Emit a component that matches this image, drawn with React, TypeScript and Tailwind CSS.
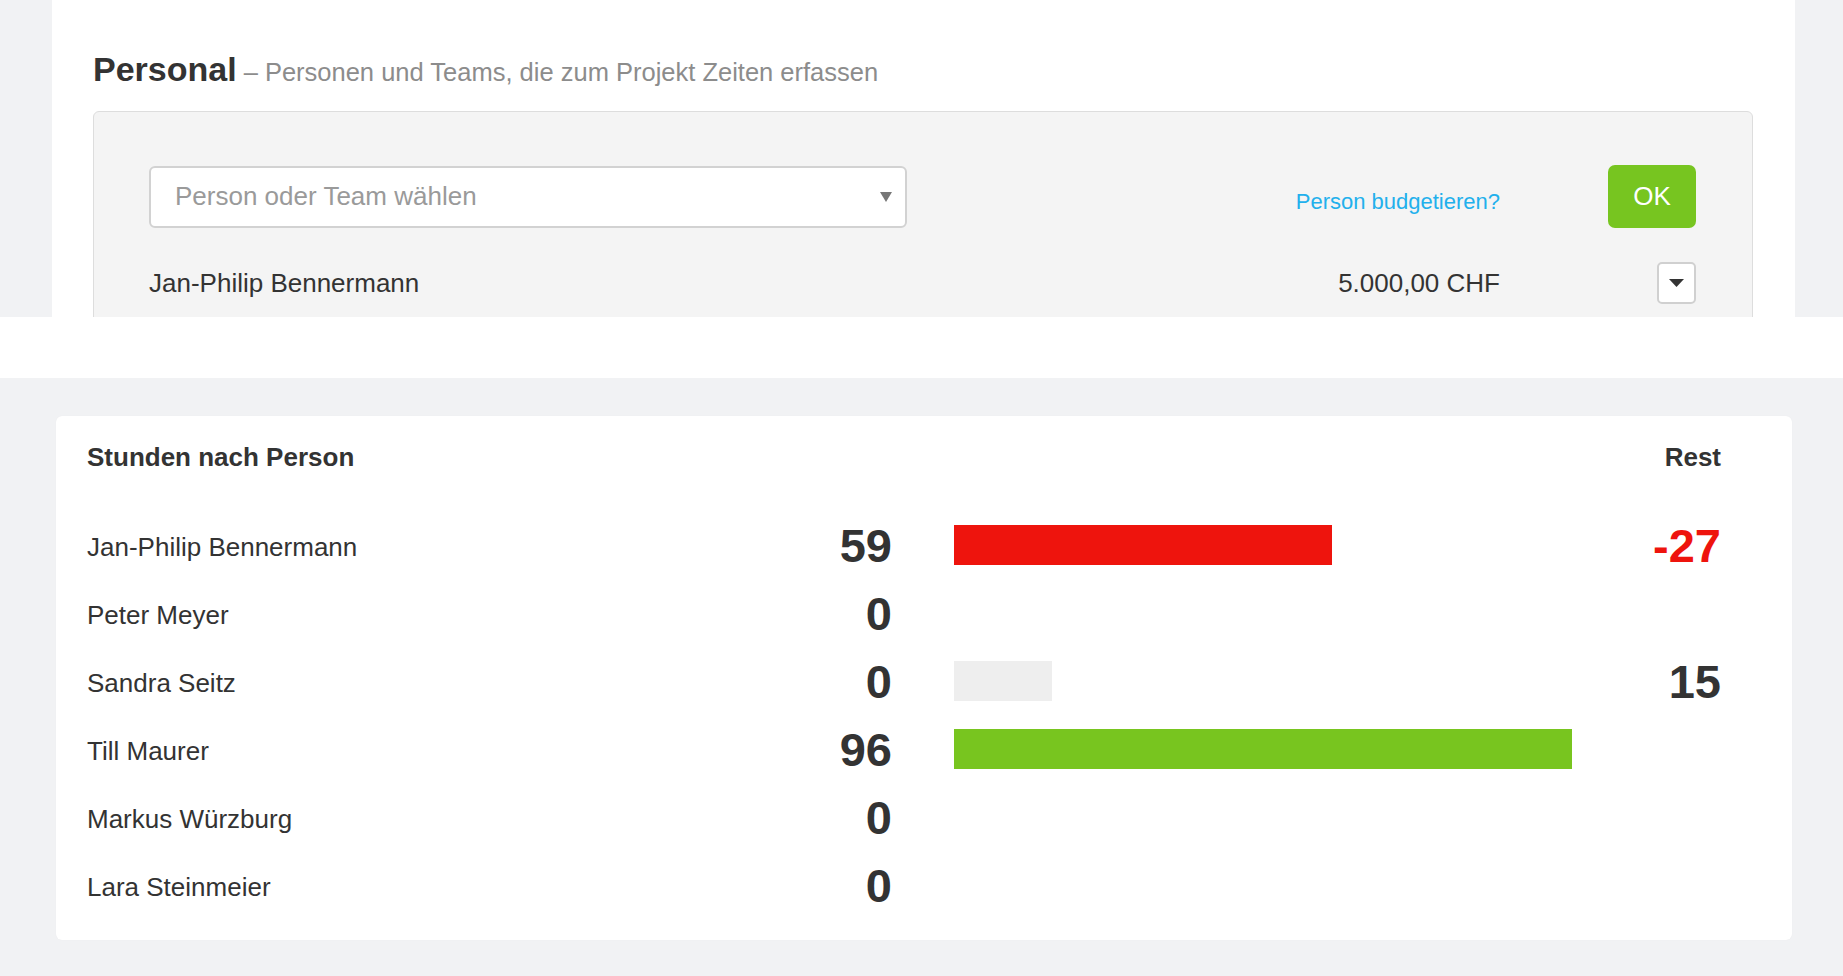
import React from "react";

const rows = [
  { name: "Jan-Philip Bennermann", hours: "59", bar: 378, color: "bg-[#ee140d]", rest: "-27", restRed: true },
  { name: "Peter Meyer", hours: "0", bar: 0, color: "", rest: "", restRed: false },
  { name: "Sandra Seitz", hours: "0", bar: 98, color: "bg-[#eeeeee]", rest: "15", restRed: false },
  { name: "Till Maurer", hours: "96", bar: 618, color: "bg-[#78c51f]", rest: "", restRed: false },
  { name: "Markus Würzburg", hours: "0", bar: 0, color: "", rest: "", restRed: false },
  { name: "Lara Steinmeier", hours: "0", bar: 0, color: "", rest: "", restRed: false },
];

export default function App() {
  return (
    <div
      className="w-[1843px] min-h-[976px] text-[#333333]"
      style={{ fontFamily: '"Liberation Sans", Arial, Helvetica, sans-serif' }}
    >
      {/* Top section (clipped) */}
      <div className="h-[317px] overflow-hidden bg-[#f1f2f4]">
        <div className="ml-[52px] mr-[48px] h-full bg-white pl-[41px] pr-[42px] pt-[49px]">
          <div className="flex items-baseline leading-[40px]">
            <span className="text-[34px] font-bold text-[#333333]">Personal</span>
            <span className="ml-[7px] text-[25.5px] text-[#8c8c8c]">
              – Personen und Teams, die zum Projekt Zeiten erfassen
            </span>
          </div>
          <div className="mt-[19px] h-[300px] rounded-[6px] border border-[#dddddd] bg-[#f4f4f4] pl-[55px] pr-[56px] pt-[53px]">
            <div className="flex items-center">
              <div className="flex h-[62px] w-[758px] items-center justify-between rounded-[6px] border-2 border-[#d2d2d2] bg-white pl-[24px] pr-[13px]">
                <span className="text-[26px] text-[#9a9a9a]">Person oder Team wählen</span>
                <svg width="12" height="10" viewBox="0 0 12 10">
                  <path d="M0 0 H12 L6 10 Z" fill="#777777" />
                </svg>
              </div>
              <div className="flex-1" />
              <span className="mt-[9px] text-[22px] text-[#22b0ec]">Person budgetieren?</span>
              <button className="ml-[108px] flex h-[63px] w-[88px] items-center justify-center rounded-[7px] bg-[#77c520] text-[26px] text-white">
                OK
              </button>
            </div>
            <div className="mt-[34px] flex items-center">
              <span className="flex-1 text-[26px] text-[#333333]">Jan-Philip Bennermann</span>
              <span className="text-[26px] text-[#333333]">5.000,00 CHF</span>
              <div className="ml-[157px] flex h-[42px] w-[39px] items-center justify-center rounded-[5px] border-2 border-[#d0d0d0] bg-white">
                <svg width="15" height="8" viewBox="0 0 15 8">
                  <path d="M0 0 H15 L7.5 8 Z" fill="#333333" />
                </svg>
              </div>
            </div>
          </div>
        </div>
      </div>

      {/* White band */}
      <div className="h-[61px] bg-white" />

      {/* Bottom section */}
      <div className="bg-[#f1f2f4] pb-[36px] pl-[56px] pr-[51px] pt-[38px]">
        <div className="rounded-[6px] bg-white pb-[21px] pl-[31px] pr-[71px] pt-[25px] shadow-[0_0_1px_rgba(0,0,0,0.06)]">
          <div className="flex h-[32px] items-center justify-between text-[26px] font-bold text-[#333333]">
            <span>Stunden nach Person</span>
            <span>Rest</span>
          </div>
          <div className="mt-[38px]">
            {rows.map((r) => (
              <div key={r.name} className="flex h-[68px] items-center">
                <div className="flex w-[805px] items-center justify-between">
                  <span className="mt-[5px] text-[26px] text-[#333333]">{r.name}</span>
                  <span className="text-[47px] font-bold leading-none text-[#333333]">{r.hours}</span>
                </div>
                <div className="ml-[62px] h-[40px] w-[640px]">
                  {r.bar > 0 && <div className={`h-full ${r.color}`} style={{ width: r.bar }} />}
                </div>
                <div
                  className={`flex-1 text-right text-[47px] font-bold leading-none ${
                    r.restRed ? "text-[#ee140d]" : "text-[#333333]"
                  }`}
                >
                  {r.rest}
                </div>
              </div>
            ))}
          </div>
        </div>
      </div>
    </div>
  );
}
